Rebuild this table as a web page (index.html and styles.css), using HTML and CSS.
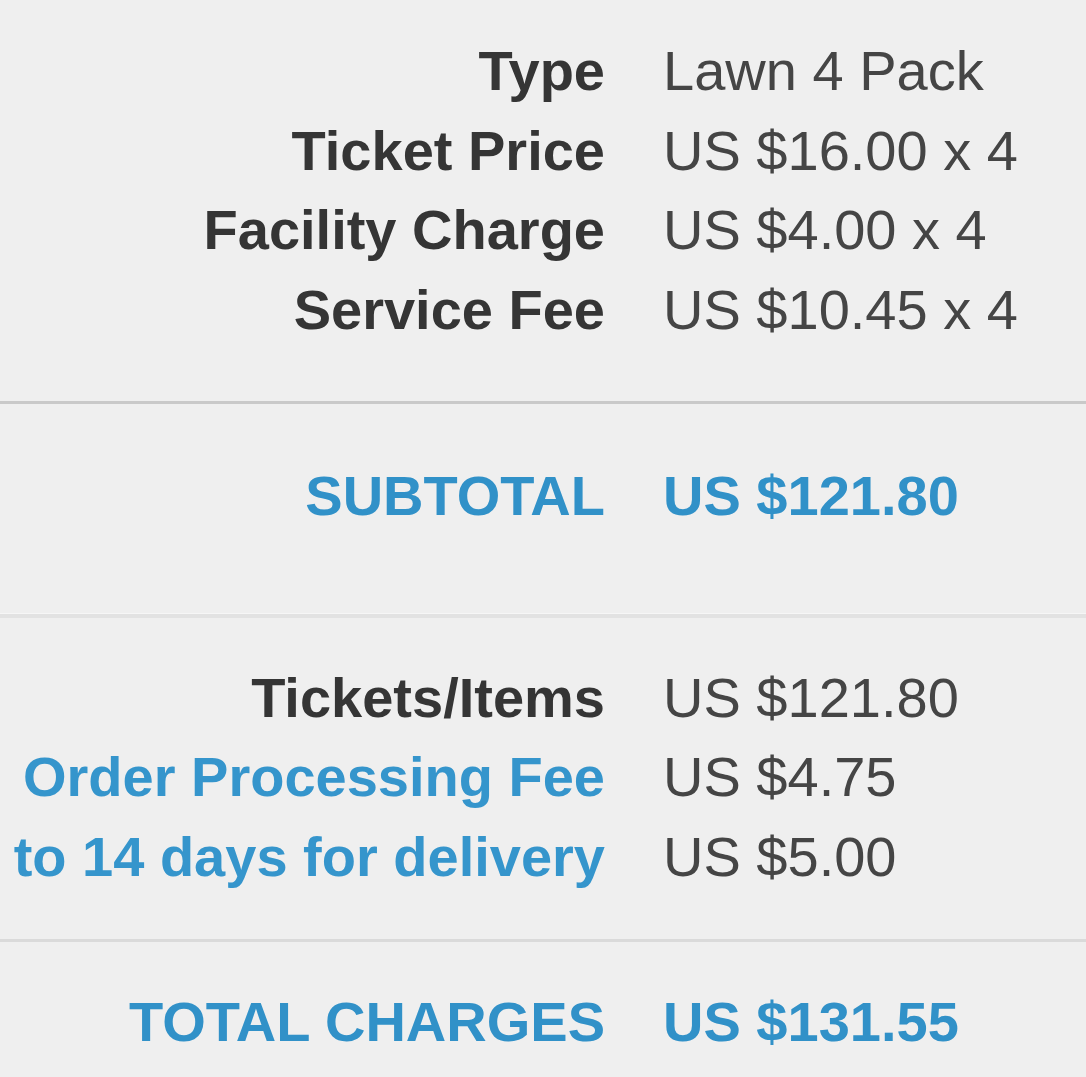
FILE: index.html
```html
<!DOCTYPE html>
<html lang="en">
<head>
<meta charset="utf-8">
<title>Order Summary</title>
<link rel="stylesheet" href="styles.css">
</head>
<body>
<div class="summary">
  <section class="block block-items">
    <div class="row"><span class="label">Type</span><span class="value">Lawn 4 Pack</span></div>
    <div class="row"><span class="label">Ticket Price</span><span class="value">US $16.00 x 4</span></div>
    <div class="row"><span class="label">Facility Charge</span><span class="value">US $4.00 x 4</span></div>
    <div class="row"><span class="label">Service Fee</span><span class="value">US $10.45 x 4</span></div>
  </section>
  <section class="block block-subtotal">
    <div class="row total"><span class="label">SUBTOTAL</span><span class="value">US $121.80</span></div>
  </section>
  <section class="block block-fees">
    <div class="row"><span class="label">Tickets/Items</span><span class="value">US $121.80</span></div>
    <div class="row link"><span class="label">Order Processing Fee</span><span class="value">US $4.75</span></div>
    <div class="row link"><span class="label">to 14 days for delivery</span><span class="value">US $5.00</span></div>
  </section>
  <section class="block block-total">
    <div class="row total"><span class="label">TOTAL CHARGES</span><span class="value">US $131.55</span></div>
  </section>
</div>
</body>
</html>
```

FILE: styles.css
```css
html, body {
  margin: 0;
  padding: 0;
  background: #efefef;
}

body {
  font-family: "Liberation Sans", Arial, sans-serif;
  font-size: 56px;
  color: #3a3a3a;
  overflow: hidden;
}

.summary {
  display: flex;
  flex-direction: column;
  width: 1086px;
}

.block {
  display: flex;
  flex-direction: column;
}

.block-items {
  padding: 31px 0 52px;
}

.block-subtotal {
  border-top: 3px solid #c9c9c9;
  box-shadow: inset 0 -1px 0 #f6f6f6;
  padding: 52px 0 78px;
}

.block-fees {
  border-top: 4px solid #e2e2e2;
  padding: 40px 0 43px;
}

.block-total {
  border-top: 3px solid #dadada;
  padding: 40px 0 20px;
}

.row {
  display: grid;
  grid-template-columns: 605px auto;
  column-gap: 58px;
  line-height: 79.5px;
  white-space: nowrap;
}

.label {
  display: flex;
  justify-content: flex-end;
  font-weight: bold;
  color: #353535;
  overflow: visible;
}

.value {
  color: #454545;
}

.link .label {
  color: #3595cc;
}

.total .label,
.total .value {
  color: #3191c8;
  font-weight: bold;
}
```
